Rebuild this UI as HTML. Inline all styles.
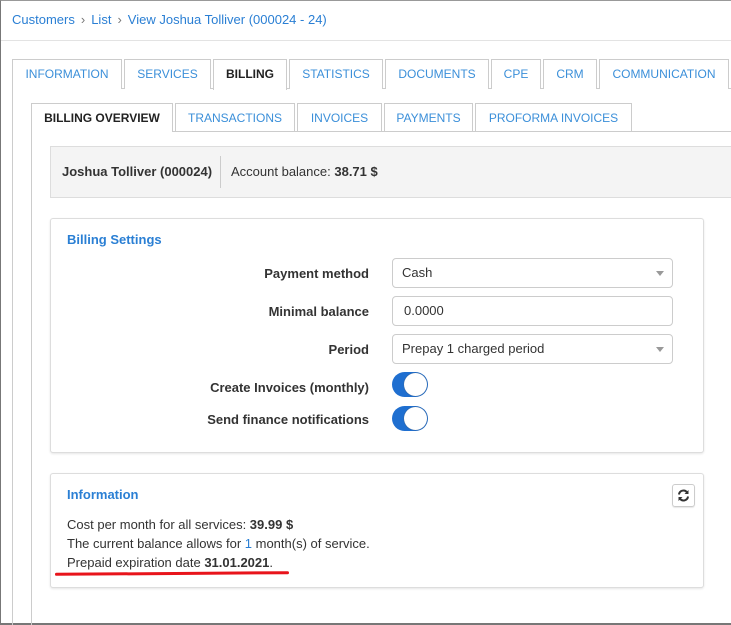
<!DOCTYPE html>
<html><head><style>
*{box-sizing:border-box;margin:0;padding:0}
body{width:731px;height:625px;background:#fff;font-family:"Liberation Sans",Arial,sans-serif;font-size:13px;color:#333;position:relative;overflow:hidden}
.a{position:absolute}
.frame{left:0;top:0;width:731px;height:625px;border-left:1px solid #777;border-top:1px solid #999;border-bottom:2px solid #777}
.bc{left:12px;top:12px;color:#2a7fd4;font-size:13px}
.bc span{color:#777;margin:0 6px;font-size:13px}
.tab{height:30px;border:1px solid #ccc;border-bottom:none;color:#3b8fd9;font-size:12px;text-align:center;line-height:28px;background:#fff}
.tab.act{color:#222;font-weight:bold;height:31px;z-index:2}
.lbl{font-weight:bold;text-align:right;width:200px;left:169px;font-size:13px}
.inp{left:392px;width:281px;height:30px;border:1px solid #ccc;border-radius:4px;padding-left:9px;line-height:28px;font-size:13px}
.caret{position:absolute;right:8px;top:12px;border-left:4px solid transparent;border-right:4px solid transparent;border-top:5px solid #999}
.tg{left:392px;width:36px;height:25px;border-radius:13px;background:#1f6fd0}
.tg::after{content:"";position:absolute;right:1px;top:1px;width:23px;height:23px;border-radius:50%;background:#fff;box-shadow:0 0 1px #555}
.card{border:1px solid #ddd;border-radius:3px;box-shadow:0 1px 2px rgba(0,0,0,.1);background:#fff}
.h{color:#2a7fd4;font-weight:bold;font-size:13px}
</style></head><body>
<div class="a frame"></div>
<div class="a bc">Customers<span>›</span>List<span>›</span>View Joshua Tolliver (000024 - 24)</div>
<div class="a" style="left:1px;top:40px;width:730px;height:1px;background:#e3e3e3"></div>

<div class="a" style="left:12px;top:88px;width:719px;height:1px;background:#ccc"></div>
<div class="a" style="left:12px;top:88px;width:1px;height:537px;background:#ccc"></div>
<div class="a tab" style="left:12px;top:59px;width:110px">INFORMATION</div>
<div class="a tab" style="left:124px;top:59px;width:87px">SERVICES</div>
<div class="a tab act" style="left:213px;top:59px;width:74px">BILLING</div>
<div class="a tab" style="left:289px;top:59px;width:94px">STATISTICS</div>
<div class="a tab" style="left:385px;top:59px;width:104px">DOCUMENTS</div>
<div class="a tab" style="left:491px;top:59px;width:50px">CPE</div>
<div class="a tab" style="left:543px;top:59px;width:54px">CRM</div>
<div class="a tab" style="left:599px;top:59px;width:130px">COMMUNICATION</div>

<div class="a" style="left:31px;top:131px;width:700px;height:1px;background:#ccc"></div>
<div class="a" style="left:31px;top:131px;width:1px;height:494px;background:#ccc"></div>
<div class="a tab act" style="left:31px;top:103px;width:142px;height:29px">BILLING OVERVIEW</div>
<div class="a tab" style="left:175px;top:103px;width:120px;height:28px">TRANSACTIONS</div>
<div class="a tab" style="left:297px;top:103px;width:85px;height:28px">INVOICES</div>
<div class="a tab" style="left:384px;top:103px;width:89px;height:28px">PAYMENTS</div>
<div class="a tab" style="left:475px;top:103px;width:157px;height:28px">PROFORMA INVOICES</div>

<div class="a" style="left:50px;top:146px;width:685px;height:52px;background:#f4f4f4;border:1px solid #ddd"></div>
<div class="a" style="left:62px;top:164px;font-weight:bold">Joshua Tolliver (000024)</div>
<div class="a" style="left:220px;top:156px;width:1px;height:32px;background:#ccc"></div>
<div class="a" style="left:231px;top:164px">Account balance: <b>38.71 $</b></div>

<div class="a card" style="left:50px;top:218px;width:654px;height:235px"></div>
<div class="a h" style="left:67px;top:232px">Billing Settings</div>
<div class="a lbl" style="top:266px">Payment method</div>
<div class="a inp" style="top:258px">Cash<i class="caret"></i></div>
<div class="a lbl" style="top:304px">Minimal balance</div>
<div class="a inp" style="top:296px;padding-left:11px">0.0000</div>
<div class="a lbl" style="top:342px">Period</div>
<div class="a inp" style="top:334px">Prepay 1 charged period<i class="caret"></i></div>
<div class="a lbl" style="top:380px">Create Invoices (monthly)</div>
<div class="a tg" style="top:372px"></div>
<div class="a lbl" style="top:412px">Send finance notifications</div>
<div class="a tg" style="top:406px"></div>

<div class="a card" style="left:50px;top:473px;width:654px;height:115px"></div>
<div class="a h" style="left:67px;top:487px">Information</div>
<div class="a" style="left:672px;top:484px;width:23px;height:23px;border:1px solid #ccc;border-radius:3px;box-shadow:0 1px 1px rgba(0,0,0,.1)"><svg width="21" height="21" viewBox="0 0 21 21" style="position:absolute;left:0;top:0"><path d="M6 9.5a4.5 4.5 0 0 1 8-2.3" stroke="#333" stroke-width="2" fill="none"/><path d="M15.5 5v4h-4z" fill="#333"/><path d="M15 11.5a4.5 4.5 0 0 1-8 2.3" stroke="#333" stroke-width="2" fill="none"/><path d="M5.5 16v-4h4z" fill="#333"/></svg></div>
<div class="a" style="left:67px;top:515px;line-height:19px">Cost per month for all services: <b>39.99 $</b><br>The current balance allows for <span style="color:#2a7fd4">1</span> month(s) of service.<br>Prepaid expiration date <b>31.01.2021</b>.</div>
<div class="a" style="left:55px;top:572px;width:234px;height:3px;background:#e8141b;border-radius:2px;transform:rotate(-0.4deg)"></div>
</body></html>
